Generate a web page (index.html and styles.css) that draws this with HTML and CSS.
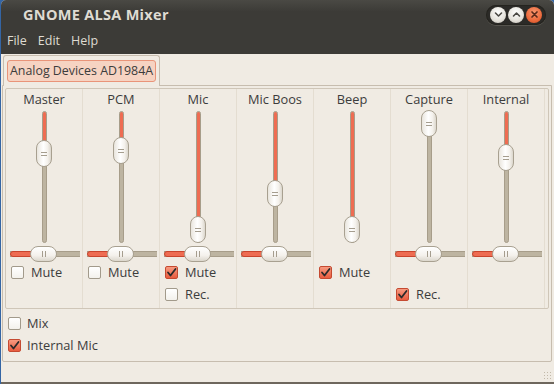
FILE: index.html
```html
<!DOCTYPE html>
<html>
<head>
<meta charset="utf-8">
<title>GNOME ALSA Mixer</title>
<link rel="stylesheet" href="styles.css">
</head>
<body>
<div class="window">
  <header class="titlebar">
    <span class="title">GNOME ALSA Mixer</span>
    <div class="controls">
      <span class="wbtn"><svg width="15" height="15" viewBox="0 0 15 15"><path d="M4.5 6 L7.5 9 L10.5 6" fill="none" stroke="#4a4843" stroke-width="1.6" stroke-linecap="round" stroke-linejoin="round"/></svg></span>
      <span class="wbtn"><svg width="15" height="15" viewBox="0 0 15 15"><path d="M4.5 9 L7.5 6 L10.5 9" fill="none" stroke="#4a4843" stroke-width="1.6" stroke-linecap="round" stroke-linejoin="round"/></svg></span>
      <span class="wbtn close"><svg width="15" height="15" viewBox="0 0 15 15"><path d="M5 5 L10 10 M10 5 L5 10" fill="none" stroke="#5a2a1a" stroke-width="1.7" stroke-linecap="round"/></svg></span>
    </div>
  </header>
  <nav class="menubar">
    <span class="menu">File</span>
    <span class="menu">Edit</span>
    <span class="menu">Help</span>
  </nav>
  <main class="content">
    <div class="tabs">
      <div class="tab"><span class="tab-label">Analog Devices AD1984A</span></div>
    </div>
    <div class="page">
      <div class="mixer">
        <div class="channel">
          <div class="ch-name">Master</div>
          <div class="vslider"><div class="vtrack"><div class="vfill" style="height:36px"></div></div><div class="vthumb" style="top:30px"><i></i><i></i></div></div>
          <div class="hslot"><div class="hslider"><div class="hfill"></div><div class="hthumb"><i></i><i></i></div></div></div>
          <div class="row"><span class="cb"></span><span>Mute</span></div>
        </div>
        <div class="channel">
          <div class="ch-name">PCM</div>
          <div class="vslider"><div class="vtrack"><div class="vfill" style="height:33px"></div></div><div class="vthumb" style="top:27px"><i></i><i></i></div></div>
          <div class="hslot"><div class="hslider"><div class="hfill"></div><div class="hthumb"><i></i><i></i></div></div></div>
          <div class="row"><span class="cb"></span><span>Mute</span></div>
        </div>
        <div class="channel">
          <div class="ch-name">Mic</div>
          <div class="vslider"><div class="vtrack"><div class="vfill" style="height:112px"></div></div><div class="vthumb" style="top:106px"><i></i><i></i></div></div>
          <div class="hslot"><div class="hslider"><div class="hfill"></div><div class="hthumb"><i></i><i></i></div></div></div>
          <div class="row"><span class="cb on"><svg width="11" height="11" viewBox="0 0 11 11"><path d="M2 5.5 L4.5 8.5 L9.5 2" fill="none" stroke="#2a2a2a" stroke-width="1.8" stroke-linecap="round" stroke-linejoin="round"/></svg></span><span>Mute</span></div>
          <div class="row"><span class="cb"></span><span>Rec.</span></div>
        </div>
        <div class="channel">
          <div class="ch-name">Mic Boos</div>
          <div class="vslider"><div class="vtrack"><div class="vfill" style="height:76px"></div></div><div class="vthumb" style="top:70px"><i></i><i></i></div></div>
          <div class="hslot"><div class="hslider"><div class="hfill"></div><div class="hthumb"><i></i><i></i></div></div></div>
        </div>
        <div class="channel">
          <div class="ch-name">Beep</div>
          <div class="vslider"><div class="vtrack"><div class="vfill" style="height:112px"></div></div><div class="vthumb" style="top:106px"><i></i><i></i></div></div>
          <div class="hslot"></div>
          <div class="row"><span class="cb on"><svg width="11" height="11" viewBox="0 0 11 11"><path d="M2 5.5 L4.5 8.5 L9.5 2" fill="none" stroke="#2a2a2a" stroke-width="1.8" stroke-linecap="round" stroke-linejoin="round"/></svg></span><span>Mute</span></div>
        </div>
        <div class="channel">
          <div class="ch-name">Capture</div>
          <div class="vslider"><div class="vtrack"></div><div class="vthumb" style="top:0px"><i></i><i></i></div></div>
          <div class="hslot"><div class="hslider"><div class="hfill"></div><div class="hthumb"><i></i><i></i></div></div></div>
          <div class="row"></div>
          <div class="row"><span class="cb on"><svg width="11" height="11" viewBox="0 0 11 11"><path d="M2 5.5 L4.5 8.5 L9.5 2" fill="none" stroke="#2a2a2a" stroke-width="1.8" stroke-linecap="round" stroke-linejoin="round"/></svg></span><span>Rec.</span></div>
        </div>
        <div class="channel">
          <div class="ch-name">Internal</div>
          <div class="vslider"><div class="vtrack"><div class="vfill" style="height:40px"></div></div><div class="vthumb" style="top:34px"><i></i><i></i></div></div>
          <div class="hslot"><div class="hslider"><div class="hfill"></div><div class="hthumb"><i></i><i></i></div></div></div>
        </div>
      </div>
      <div class="switches">
        <div class="srow"><span class="cb"></span><span>Mix</span></div>
        <div class="srow"><span class="cb on"><svg width="11" height="11" viewBox="0 0 11 11"><path d="M2 5.5 L4.5 8.5 L9.5 2" fill="none" stroke="#2a2a2a" stroke-width="1.8" stroke-linecap="round" stroke-linejoin="round"/></svg></span><span>Internal Mic</span></div>
      </div>
    </div>
    <div class="grip"></div>
  </main>
</div>
</body>
</html>
```

FILE: styles.css
```css
* { box-sizing: border-box; margin: 0; padding: 0; }
html, body { width: 554px; height: 384px; overflow: hidden; }
body {
  background: #3465a4;
  font-family: "Open Sans", "DejaVu Sans", sans-serif;
  font-size: 12px;
  color: #3c3c3c;
}
.window {
  margin-left: 1px;
  width: 553px;
  height: 384px;
  display: flex;
  flex-direction: column;
  background: #f0ebe3;
  border-radius: 5px 5px 0 0;
  overflow: hidden;
}
.titlebar {
  height: 29px;
  flex: none;
  display: flex;
  align-items: center;
  justify-content: space-between;
  background: linear-gradient(#4a4944, #3c3b37 40%);
  padding: 0 8px 0 22px;
}
.title {
  font-weight: bold;
  font-size: 14.5px;
  color: #dfdbd2;
  letter-spacing: 0.3px;
}
.controls {
  display: flex;
  gap: 2px;
  padding: 2px 4px;
  background: #2b2a27;
  border-radius: 10px;
  box-shadow: inset 0 0 0 1px #25241f, 0 1px 0 #55534d;
}
.wbtn {
  width: 16px;
  height: 16px;
  border-radius: 50%;
  background: radial-gradient(circle at 50% 35%, #ffffff, #e4e1da 60%, #bfbbb2);
  display: flex;
  align-items: center;
  justify-content: center;
}
.wbtn.close {
  background: radial-gradient(circle at 50% 35%, #f89870, #ec6a3c 60%, #c94a22);
}
.menubar {
  height: 25px;
  flex: none;
  display: flex;
  align-items: center;
  gap: 11px;
  padding: 0 0 2px 6px;
  background: #3c3b37;
  color: #dfdbd2;
  font-size: 12.5px;
}
.content {
  flex: 1;
  display: flex;
  flex-direction: column;
  padding: 1px 2px 0 1px;
  position: relative;
  border-bottom: 2px solid #6e675d;
}
.tabs {
  display: flex;
  padding-left: 1px;
  height: 30px;
  position: relative;
  z-index: 1;
}
.tab {
  width: 157px;
  border: 1px solid #c7bdaf;
  border-bottom: none;
  border-radius: 3px 3px 0 0;
  background: #f0ebe3;
  padding: 4px 3px 2px 3px;
  height: 31px;
}
.tab-label {
  display: block;
  height: 22px;
  line-height: 20px;
  padding: 0 2px;
  background: #f6d3c2;
  border: 1px solid #e99479;
  border-radius: 3px;
  white-space: nowrap;
  font-size: 12.4px;
}
.page {
  border: 1px solid #c7bdaf;
  border-radius: 0 0 2px 2px;
  padding: 2px 2px 0 2px;
  height: 277px;
  display: flex;
  flex-direction: column;
}
.mixer {
  display: grid;
  grid-template-columns: repeat(7, 77px);
  border: 1px solid #cfc6b8;
  border-radius: 2px;
  height: 221px;
}
.channel {
  border-right: 1px solid #e4ddd1;
  display: flex;
  flex-direction: column;
  align-items: stretch;
}
.ch-name {
  height: 21px;
  line-height: 20px;
  text-align: center;
  white-space: nowrap;
  overflow: hidden;
  font-size: 12.8px;
}
.vslider {
  position: relative;
  width: 16px;
  height: 133px;
  margin: 0 auto;
  flex: none;
}
.vtrack {
  position: absolute;
  left: 6px;
  top: 1px;
  bottom: 0;
  width: 5px;
  border-radius: 3px;
  background: #bdb4a1;
  border: 1px solid #a79d8a;
  overflow: hidden;
}
.vfill {
  background: #ee6c52;
  box-shadow: inset 0 0 0 1px #c9452e;
  margin: -1px;
}
.vthumb {
  position: absolute;
  left: 0;
  width: 16px;
  height: 27px;
  border-radius: 8px;
  border: 1px solid #a8a090;
  background: linear-gradient(90deg, #e9e5dd, #ffffff 45%, #f4f1ec 75%, #dcd7cd);
  display: flex;
  flex-direction: column;
  align-items: center;
  justify-content: center;
  gap: 2px;
}
.vthumb i {
  display: block;
  width: 6px;
  height: 1px;
  background: #a59d8e;
}
.hslot {
  height: 16px;
  margin-top: 3px;
  flex: none;
  display: flex;
  justify-content: center;
}
.hslider {
  position: relative;
  width: 70px;
  height: 16px;
  margin-left: 2px;
  background: linear-gradient(transparent 5px, #a79d8a 5px, #a79d8a 6px, #bdb4a1 6px, #bdb4a1 10px, #a79d8a 10px, #a79d8a 11px, transparent 11px);
  border-radius: 3px;
}
.hfill {
  position: absolute;
  left: 0;
  top: 5px;
  width: 24px;
  height: 6px;
  border-radius: 3px 0 0 3px;
  background: #ee6c52;
  border: 1px solid #c9452e;
}
.hthumb {
  position: absolute;
  left: 20px;
  top: 0;
  width: 27px;
  height: 16px;
  border-radius: 8px;
  border: 1px solid #a8a090;
  background: linear-gradient(#ffffff, #f4f1ec 60%, #dcd7cd);
  display: flex;
  align-items: center;
  justify-content: center;
  gap: 2px;
}
.hthumb i {
  display: block;
  width: 1px;
  height: 6px;
  background: #a59d8e;
}
.row {
  height: 22px;
  flex: none;
  display: flex;
  align-items: center;
  gap: 7px;
  padding-left: 5px;
  padding-bottom: 2px;
  font-size: 12.8px;
}
.cb {
  width: 13px;
  height: 13px;
  flex: none;
  border: 1px solid #a29a8b;
  border-radius: 2px;
  background: linear-gradient(#ffffff, #f3f1ec);
  display: flex;
  align-items: center;
  justify-content: center;
}
.cb.on {
  border-color: #c54a31;
  background: linear-gradient(#f79a80, #e85c3f);
}
.switches {
  padding-top: 3px;
  padding-left: 3px;
}
.srow {
  height: 22px;
  display: flex;
  align-items: center;
  gap: 6px;
  font-size: 12.8px;
}
.grip {
  position: absolute;
  right: 1px;
  bottom: 1px;
  width: 10px;
  height: 10px;
  background-image: radial-gradient(circle, #c2b9a9 0.8px, transparent 1px);
  background-size: 3px 3px;
}
```
